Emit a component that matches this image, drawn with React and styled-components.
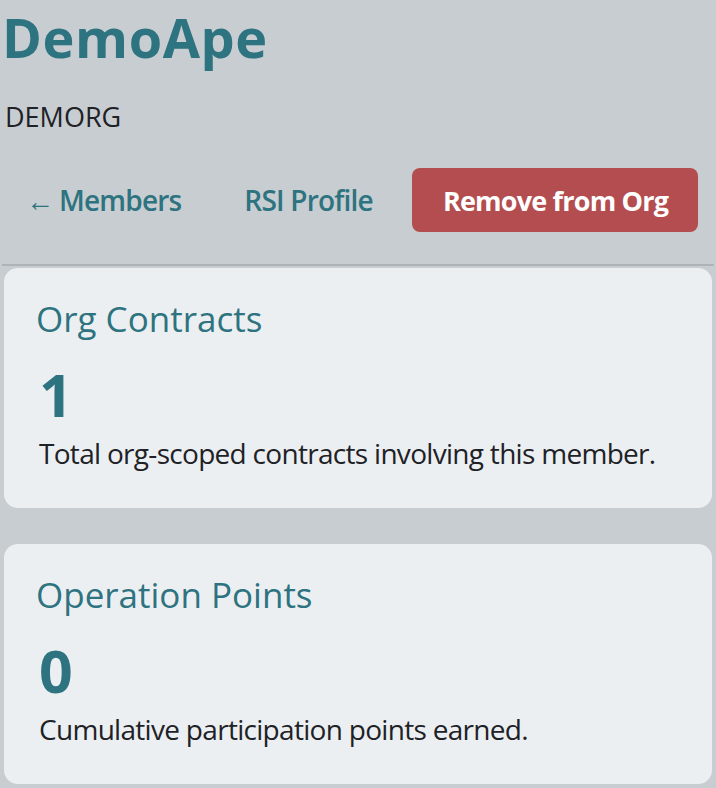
import React from 'react';
import styled, { createGlobalStyle } from 'styled-components';

const teal = '#2d7380';
const ink = '#1e2226';

const GlobalStyle = createGlobalStyle`
  html, body {
    margin: 0;
    padding: 0;
    background: #c8cdd1;
  }
  body {
    font-family: 'Open Sans', 'Noto Sans', sans-serif;
    color: ${ink};
  }
`;

const Page = styled.div`
  padding: 0 2px 4px;
`;

const Header = styled.header`
  border-bottom: 2px solid #aeb3b7;
  padding-bottom: 32px;
`;

const Title = styled.h1`
  margin: 0;
  font-size: 54px;
  line-height: 74px;
  font-weight: 700;
  color: ${teal};
  letter-spacing: 0.6px;
`;

const OrgTag = styled.div`
  margin: 25px 0 0 3px;
  font-size: 27px;
  line-height: 36px;
`;

const Actions = styled.nav`
  display: flex;
  align-items: center;
  gap: 15px;
  margin-top: 33px;
`;

const NavLink = styled.a`
  display: inline-flex;
  align-items: center;
  gap: 5px;
  height: 64px;
  padding: 0 24px;
  font-size: 28px;
  font-weight: 600;
  letter-spacing: -0.8px;
  color: ${teal};
  text-decoration: none;
`;

const Arrow = styled.span`
  font-weight: 400;
  letter-spacing: 0;
`;

const DangerButton = styled.button`
  height: 64px;
  padding: 0 30px 0 31px;
  border: none;
  border-radius: 8px;
  background: #b34d4f;
  color: #fff;
  font-family: inherit;
  font-size: 27px;
  font-weight: 700;
  letter-spacing: -0.8px;
`;

const Stack = styled.div`
  display: flex;
  flex-direction: column;
  gap: 36px;
  padding: 2px 2px 0;
`;

const Card = styled.section`
  box-sizing: border-box;
  height: 240px;
  padding: 29px 32px 0;
  background: #eceff2;
  border-radius: 14px;
`;

const CardTitle = styled.h2`
  margin: 0;
  font-size: 35px;
  line-height: 44px;
  font-weight: 500;
  color: ${teal};
`;

const Value = styled.div`
  margin: 21px 0 0 3px;
  font-size: 59px;
  line-height: 64px;
  font-weight: 700;
  color: ${teal};
`;

const Note = styled.p`
  margin: 9px 0 0 3px;
  font-size: 28px;
  line-height: 36px;
  letter-spacing: -0.7px;
`;

const stats = [
  { title: 'Org Contracts', value: 1, note: 'Total org-scoped contracts involving this member.' },
  { title: 'Operation Points', value: 0, note: 'Cumulative participation points earned.' },
];

export default function App() {
  return (
    <Page>
      <GlobalStyle />
      <Header>
        <Title>DemoApe</Title>
        <OrgTag>DEMORG</OrgTag>
        <Actions>
          <NavLink href="#">
            <Arrow>←</Arrow>
            <span>Members</span>
          </NavLink>
          <NavLink href="#">RSI Profile</NavLink>
          <DangerButton type="button">Remove from Org</DangerButton>
        </Actions>
      </Header>
      <Stack>
        {stats.map((s) => (
          <Card key={s.title}>
            <CardTitle>{s.title}</CardTitle>
            <Value>{s.value}</Value>
            <Note>{s.note}</Note>
          </Card>
        ))}
      </Stack>
    </Page>
  );
}
